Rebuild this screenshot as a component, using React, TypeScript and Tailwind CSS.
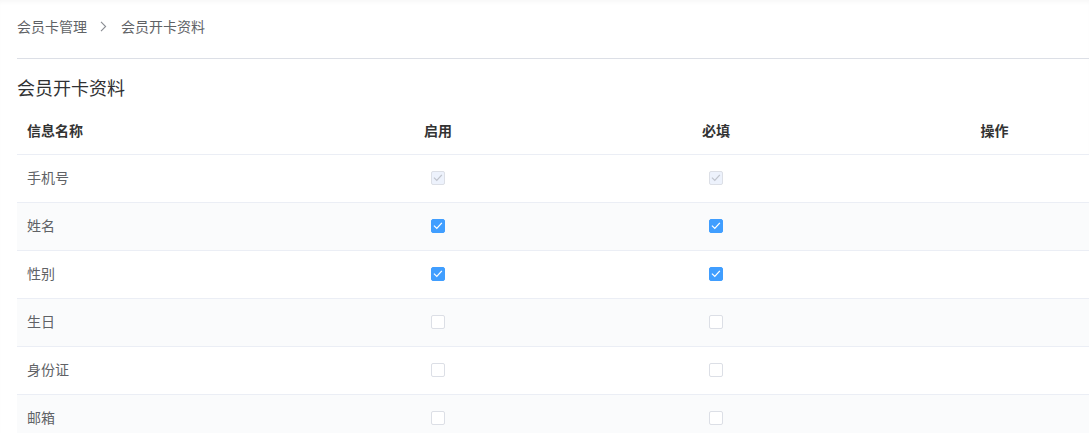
import React from "react";

type State = "on" | "off" | "disabled";
type Row = { name: string; enabled: State; required: State };

const rows: Row[] = [
  { name: "手机号", enabled: "disabled", required: "disabled" },
  { name: "姓名", enabled: "on", required: "on" },
  { name: "性别", enabled: "on", required: "on" },
  { name: "生日", enabled: "off", required: "off" },
  { name: "身份证", enabled: "off", required: "off" },
  { name: "邮箱", enabled: "off", required: "off" },
];

function Check({ color }: { color: string }) {
  return (
    <svg width="12" height="12" viewBox="0 0 12 12" fill="none" className="block">
      <path d="M2.4 6.1 L4.8 8.4 L9.4 3.4" stroke={color} strokeWidth="1.3" strokeLinecap="square" />
    </svg>
  );
}

function Checkbox({ state }: { state: State }) {
  if (state === "on") {
    return (
      <span className="flex h-[14px] w-[14px] items-center justify-center rounded-[2px] border border-[#409eff] bg-[#409eff]">
        <Check color="#ffffff" />
      </span>
    );
  }
  if (state === "disabled") {
    return (
      <span className="flex h-[14px] w-[14px] items-center justify-center rounded-[2px] border border-[#dcdfe6] bg-[#edf2fc]">
        <Check color="#c0c4cc" />
      </span>
    );
  }
  return <span className="block h-[14px] w-[14px] rounded-[2px] border border-[#dcdfe6] bg-white" />;
}

export default function App() {
  return (
    <div
      className="h-[433px] w-[1089px] overflow-hidden bg-white shadow-[inset_0_4px_4px_-2px_rgba(0,0,0,0.035)]"
      style={{ fontFamily: '"Noto Sans CJK SC", "Noto Sans", sans-serif' }}
    >
      <div className="w-[1134px] pl-[17px]">
        <div className="flex h-[59px] items-start border-b border-[#dcdfe6] pt-[16px] text-[14px] leading-5 text-[#606266]">
          <span>会员卡管理</span>
          <span className="mx-[13px] flex h-5 items-center">
            <svg width="7" height="11" viewBox="0 0 7 11" fill="none">
              <path d="M1 0.8 L5.6 5.5 L1 10.2" stroke="#8a8d93" strokeWidth="1.1" />
            </svg>
          </span>
          <span className="ml-[1px]">会员开卡资料</span>
        </div>

        <div className="mb-[7px] mt-[16px] h-[25px] text-[18px] leading-6 text-[#303133]">会员开卡资料</div>

        <div className="w-[1117px] text-[14px]">
          <div className="grid h-[48px] grid-cols-[282px_278px_278px_279px] items-center border-b border-[#ebeef5] pb-[1px] font-bold text-[#333333]">
            <div className="pl-[10px]">信息名称</div>
            <div className="text-center">启用</div>
            <div className="text-center">必填</div>
            <div className="text-center">操作</div>
          </div>
          {rows.map((r, i) => (
            <div
              key={r.name}
              className={
                "grid h-[48px] grid-cols-[282px_278px_278px_279px] items-center border-b border-[#ebeef5] pb-[2px] text-[#606266] " +
                (i % 2 === 1 ? "bg-[#fafbfc]" : "bg-white")
              }
            >
              <div className="pl-[10px]">{r.name}</div>
              <div className="flex justify-center">
                <Checkbox state={r.enabled} />
              </div>
              <div className="flex justify-center">
                <Checkbox state={r.required} />
              </div>
              <div />
            </div>
          ))}
        </div>
      </div>
    </div>
  );
}
